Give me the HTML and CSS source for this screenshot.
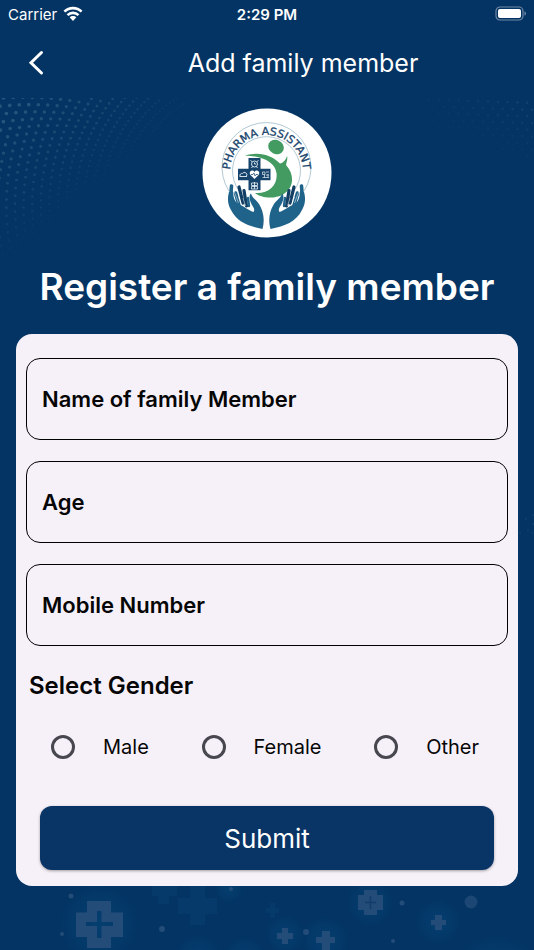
FILE: index.html
```html
<!DOCTYPE html>
<html lang="en">
<head>
<meta charset="utf-8">
<meta name="viewport" content="width=device-width, initial-scale=1">
<title>Add family member</title>
<link rel="stylesheet" href="styles.css">
</head>
<body>
<div class="screen">
  <div class="status">
    <div class="carrier">
      <span>Carrier</span>
      <svg width="20" height="16" viewBox="0 0 20 16" aria-hidden="true">
        <g fill="none" stroke="#fff" stroke-width="2.6">
          <path d="M1.4 5.6C6.2.9 13.8.9 18.6 5.6"/>
          <path d="M4.5 9.1C7.5 6.1 12.5 6.1 15.5 9.1"/>
        </g>
        <path fill="#fff" d="M6.6 11.3C8.5 9.5 11.5 9.5 13.4 11.3L10 14.9Z"/>
      </svg>
    </div>
    <time class="clock">2:29 PM</time>
    <svg class="battery" width="31" height="16" viewBox="0 0 31 16" aria-hidden="true">
      <rect x="1" y="1" width="27" height="13" rx="4" fill="none" stroke="#7189a5" stroke-width="1.2"/>
      <rect x="3" y="3" width="23" height="9" rx="2" fill="#fff"/>
      <path d="M29.500 5.3c2 .8 2 3.6 0 4.4z" fill="#7189a5"/>
    </svg>
  </div>

  <header class="bar">
    <button class="back" type="button" aria-label="Back">
      <svg width="18" height="28" viewBox="0 0 18 28" aria-hidden="true"><path d="M14.500 3.500 4 13.800 14.500 24" fill="none" stroke="#fff" stroke-width="3" stroke-linecap="round"/></svg>
    </button>
    <h1 class="title">Add family member</h1>
  </header>

  <main class="content">
    <svg class="dots" id="dots" width="534" height="500" viewBox="0 0 534 500" aria-hidden="true"></svg>
    <svg class="crosses" width="534" height="72" viewBox="0 878 534 72" aria-hidden="true">
      <defs>
        <radialGradient id="glow"><stop offset="0" stop-color="#07548a" stop-opacity=".32"/><stop offset=".65" stop-color="#07548a" stop-opacity=".16"/><stop offset="1" stop-color="#07548a" stop-opacity="0"/></radialGradient>
      </defs>
      <g fill="url(#glow)">
        <circle cx="99" cy="924" r="41"/><circle cx="198" cy="958" r="24"/><circle cx="245" cy="958" r="22"/>
        <circle cx="370" cy="903" r="24"/><circle cx="438" cy="922" r="23"/><circle cx="325" cy="940" r="24"/>
        <circle cx="285" cy="935" r="20"/><ellipse cx="496" cy="968" rx="42" ry="34"/><circle cx="229" cy="889" r="14"/>
      </g>
      <g fill="#053a6a">
        <path d="M152 886h25v10h-8v8h-11v-8h-6zM190 886h15v12h12v16h-12v11h-15v-11h-12v-16h12z"/>
        <path d="M270 903h5v5h4v5h-4v5h-5v-5h-4v-5h4z"/>
      </g>
      <g fill="#234c78">
        <path fill-rule="evenodd" d="M87 901h24v11.500h12v24.500h-12v11H87v-11H76v-24.500h11zM97 911v11H86v4h11v12h4.500v-12H113v-4h-11.500v-11z"/>
        <path d="M364 890h13v5h6v15h-6v5h-13v-5h-6v-15h6z"/>
        <path d="M435 915h7v5h4v5h-4v5h-7v-5h-4v-5h4zM282 928h6v5h5v6h-5v5h-6v-5h-5v-6h5zM322 931h8v6h5v6h-5v7h-8v-7h-6v-6h6z"/>
        <circle cx="471" cy="902" r="6.500" opacity=".8"/><circle cx="402" cy="903" r="2.500"/><circle cx="306" cy="932" r="3"/><circle cx="393" cy="941" r="2"/>
        <circle cx="71" cy="896" r="2.500"/><circle cx="62" cy="934" r="2"/><circle cx="162" cy="929" r="3"/><circle cx="231" cy="889" r="2"/>
      </g>
      <path d="M370.500 896v13M365 902.500h11" stroke="#123c69" stroke-width="1.500"/>
    </svg>

    <svg class="logo" width="130" height="130" viewBox="0 0 130 130" role="img" aria-label="Pharma Assistant">
      <defs><path id="arc" d="M29 72A36.500 36.500 0 1 1 100 72"/></defs>
      <circle cx="65" cy="65" r="64.500" fill="#fff"/>
      <g fill="none" stroke="#8fb1c2" stroke-width=".7">
        <path d="M27 83A44.500 44.500 0 1 1 102 83"/><path d="M38 84A34 34 0 1 1 91 84"/>
      </g>
      <text class="logo-text"><textPath href="#arc" startOffset="50%" text-anchor="middle">PHARMA ASSISTANT</textPath></text>
      <ellipse cx="74" cy="39" rx="8" ry="7" transform="rotate(25 74 39)" fill="#439b62"/>
      <path fill="#439b62" d="M43 47.500C57 43 70 47 78 55.500C81 55 84 52 85 48C86 50 84.500 54 84 57C93 67 92 80 81 86.500C72 91.500 59 90 53 85C67 86 76 77 74.500 65C73 54 60 48 43 47.500Z"/>
      <path fill="#17446c" d="M46.500 50h12v10.700h10v11.600h-10v10h-12v-10H36V60.700h10.500z"/>
      <g fill="none" stroke="#e9f2f7" stroke-width=".9">
        <circle cx="52.500" cy="56" r="3"/><path d="m48.500 52.500 1.500 1M56.500 52.500l-1.500 1M52.500 54.500v1.500h1.500M50.500 58.500l-1 1.500M54.500 58.500l1 1.500"/>
        <path d="M37.500 68.500h7.500M38 68a2 2 0 0 1 2.500-2.500 2.300 2.300 0 0 1 4 2.500"/>
        <path d="M60.500 64h2.500v2.500h-2.500zM64 64h3M64 67h3M60.500 69.500h6.500M62.500 67v2.500M66 66v3.500" stroke-width=".7"/>
        <path d="M49.500 75h6v2.500h-6zM49.500 78.500h6v2.500h-6zM52.500 74v7" stroke-width=".8"/>
      </g>
      <path d="M52.500 71 48.500 67C46 63.500 50.500 60.500 52.500 64C54.500 60.500 59 63.500 56.500 67Z" fill="#fff"/>
      <path d="M49 66.500h2l1-1.500 1 3 1-1.500h2" stroke="#17446c" stroke-width=".7" fill="none"/>
      <g id="hand">
        <path d="M37 79 41 95M42 82.500 44.500 98" stroke="#133e63" stroke-width="3.200" stroke-linecap="round" fill="none"/>
        <path d="M29.500 78C28 86 30 93 35 101M33.500 85 37.500 99" stroke="#1f638b" stroke-width="3.600" stroke-linecap="round" fill="none"/>
        <path d="M46 90 47 98" stroke="#1f638b" stroke-width="2.400" stroke-linecap="round" fill="none"/>
        <path fill="#1f638b" d="M27 84C25 91 26 97 29 102C35 114 46 118 60.500 121C63 112 61.500 103 57 96C53.500 91 50 90 49 85.500C46.500 87 47.500 93 50 97C52 100 53 102 51.500 104C46 102 42 98 38 97C34 95 30 90 28.500 84Z"/>
        <path d="M32 83 36.500 95M36.500 89 39.500 97M41 90 43.500 98" stroke="#fff" stroke-width=".5" fill="none"/>
      </g>
      <use href="#hand" transform="matrix(-1 0 0 1 129 0)"/>
    </svg>

    <h2 class="heading">Register a family member</h2>

    <form class="card">
      <input class="field" type="text" aria-label="Name of family Member" placeholder="Name of family Member">
      <input class="field" type="text" aria-label="Age" placeholder="Age">
      <input class="field" type="tel" aria-label="Mobile Number" placeholder="Mobile Number">
      <fieldset class="gender">
        <legend>Select Gender</legend>
        <div class="options">
          <label class="option"><input type="radio" name="gender" value="male"><span>Male</span></label>
          <label class="option"><input type="radio" name="gender" value="female"><span>Female</span></label>
          <label class="option"><input type="radio" name="gender" value="other"><span>Other</span></label>
        </div>
      </fieldset>
      <button class="submit" type="submit">Submit</button>
    </form>
  </main>
</div>
<script src="dots.js"></script>
</body>
</html>
```
FILE: styles.css
```css
* { box-sizing: border-box; }

body {
  margin: 0;
  background: #033463;
  color: #fff;
  font-family: Inter, "Liberation Sans", sans-serif;
}

.screen {
  min-height: 100vh;
  display: flex;
  flex-direction: column;
}

.status {
  display: grid;
  grid-template-columns: 1fr auto 1fr;
  align-items: center;
  height: 28px;
  padding: 0 8px;
  font-size: 15px;
}

.carrier {
  display: flex;
  align-items: center;
  gap: 6px;
}

.clock { font-weight: 600; }
.battery { justify-self: end; }

.bar {
  display: grid;
  grid-template-columns: 72px 1fr;
  align-items: center;
  height: 70px;
}

.back {
  display: flex;
  justify-content: center;
  align-items: center;
  height: 48px;
  padding: 0;
  border: 0;
  background: none;
}

.title {
  margin: 0;
  text-align: center;
  font-size: 25px;
  font-weight: 400;
}

.content {
  position: relative;
  flex: 1;
  display: flex;
  flex-direction: column;
  align-items: center;
  padding: 10px 16px 64px;
  overflow: hidden;
}

.dots {
  position: absolute;
  top: 0;
  left: 0;
}

.crosses {
  position: absolute;
  bottom: 0;
  left: 0;
}

.logo { position: relative; }

.logo-text {
  font-family: "DejaVu Sans", sans-serif;
  font-size: 11px;
  fill: #17446c;
  stroke: #17446c;
  stroke-width: 0.3px;
}

.heading {
  position: relative;
  margin: 26px 0 24px;
  font-size: 37px;
  line-height: 46px;
  font-weight: 600;
  white-space: nowrap;
}

.card {
  position: relative;
  display: flex;
  flex-direction: column;
  width: 100%;
  padding: 24px 10px 16px;
  border-radius: 16px;
  background: #f6f1f9;
  color: #060606;
}

.field {
  width: 100%;
  height: 82px;
  margin-bottom: 21px;
  padding: 0 15px;
  border: 1px solid #000;
  border-radius: 14px;
  background: none;
  color: inherit;
  font: 600 22px Inter, "Liberation Sans", sans-serif;
}

.field::placeholder {
  color: #060606;
  opacity: 1;
}

.gender {
  margin: 0;
  padding: 0 3px;
  border: 0;
}

.gender legend {
  padding: 3px 0 0;
  font-size: 24px;
  line-height: 32px;
  font-weight: 600;
}

.options {
  display: flex;
  justify-content: space-between;
  padding: 33px 26px 47px 22px;
}

.option {
  display: flex;
  align-items: center;
  gap: 28px;
  font-size: 20px;
  line-height: 24px;
}

.option input {
  appearance: none;
  width: 24px;
  height: 24px;
  margin: 0;
  border: 3px solid #48464f;
  border-radius: 50%;
}

.option input:checked {
  background: radial-gradient(#093566 0 5px, transparent 6px);
}

.submit {
  height: 64px;
  margin: 0 14px;
  border: 0;
  border-radius: 12px;
  background: #093566;
  box-shadow: 0 1px 3px rgba(0, 0, 0, 0.35);
  color: #fff;
  font: 400 26px Inter, "Liberation Sans", sans-serif;
}
```
FILE: dots.js
```js
// Draws the halftone texture at the edges of the page background.
const svg = document.getElementById("dots");

function dot(x, y, strength) {
  if (x < -2 || x > 536 || y < -1 || strength <= 0.03) return;
  const c = document.createElementNS("http://www.w3.org/2000/svg", "circle");
  c.setAttribute("cx", x.toFixed(1));
  c.setAttribute("cy", y.toFixed(1));
  c.setAttribute("r", (0.9 + strength * 1.2).toFixed(2));
  c.setAttribute("fill", "#4b829d");
  c.setAttribute("opacity", (strength * 0.55).toFixed(2));
  svg.appendChild(c);
}

// Left corner: arcs around a distant centre, every other arc shifted half a step.
for (let i = 0; i < 32; i++) {
  const r = 60 + i * 8.6;
  for (let k = 0; k < 72; k++) {
    const a = (k + (i % 2) / 2) * 0.034 - 0.5;
    const x = 247 - r * Math.cos(a);
    const y = 108 - r * Math.sin(a);
    dot(x, y, Math.min(0.8, 0.95 - (x / 235 + y / 200)));
  }
}

// Right corner: nearly level rows that fade towards the left and downwards.
for (let row = 0; row < 17; row++) {
  for (let col = 0; col < 22; col++) {
    const x = 537 - col * 9.8 - (row % 2) * 4.9;
    const y = 5 + row * 6.7 - col * 0.3;
    dot(x, y, 0.38 - (537 - x) / 520 - y / 290);
  }
}

// Sparse dots on the right edge, beside the form.
[[533, 417], [526, 421], [533, 426], [528, 432], [520, 435], [532, 435]].forEach(([x, y]) => dot(x, y, 0.25));
```
